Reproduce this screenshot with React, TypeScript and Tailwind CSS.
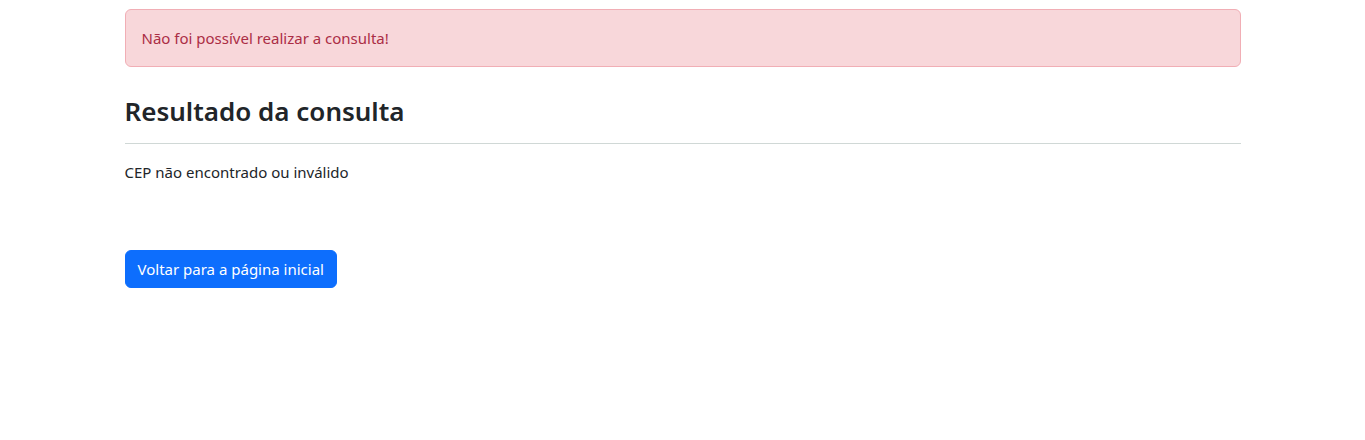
export default function App() {
  return (
    <div className="min-h-screen bg-white text-[#212529] font-['Noto_Sans',sans-serif] text-[15px] leading-6">
      <div className="mx-auto max-w-[1140px] px-3">
        <div className="mt-[9px] rounded-[6px] border border-[#f1aeb5] bg-[#f8d7da] p-4 text-[#ab2d45]">
          Não foi possível realizar a consulta!
        </div>

        <h3 className="mt-[27px] text-[26px] font-semibold leading-[34px]">Resultado da consulta</h3>
        <hr className="mt-[15px] mb-4 border-t border-[#d0d8d6]" />

        <p className="mb-[66px]">CEP não encontrado ou inválido</p>

        <button className="rounded-[6px] border border-[#0d6efd] bg-[#0d6efd] px-3 py-1.5 text-white">
          Voltar para a página inicial
        </button>
      </div>
    </div>
  );
}
